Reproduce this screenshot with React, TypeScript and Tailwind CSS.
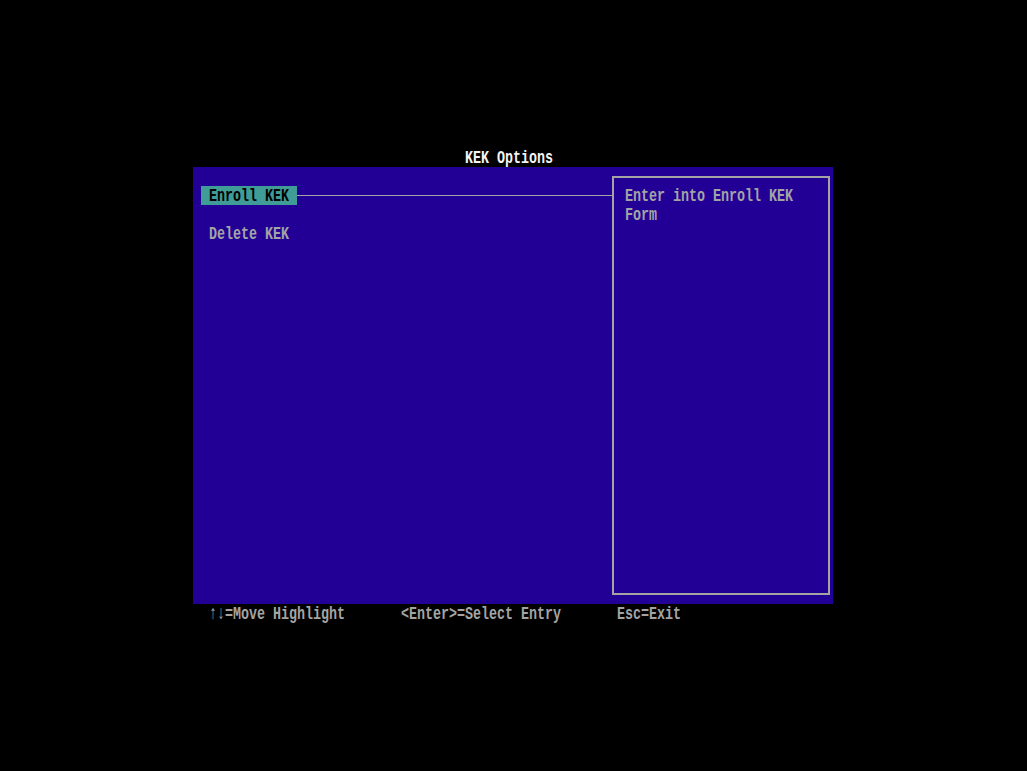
import type { ReactNode } from "react"

// 8x19 text cells: Liberation Mono at 19px is 11.4px wide, squeezed down to 8px
function Txt({ children, className = "" }: { children: ReactNode; className?: string }) {
  return (
    <span
      className={
        "block h-[19px] pt-px whitespace-pre origin-left scale-x-[0.7018] font-['Liberation_Mono','DejaVu_Sans_Mono',monospace] font-bold text-[19px] leading-[18px] " +
        className
      }
    >
      {children}
    </span>
  )
}

export default function App() {
  return (
    <div className="w-full h-[771px] bg-black overflow-hidden">
      <div className="ml-[193px] pt-[148px] w-[640px]">

        {/* title row */}
        <div className="h-[19px] pl-[272px]">
          <Txt className="text-[#f4f4f4]">KEK Options</Txt>
        </div>

        {/* main panel */}
        <div className="h-[437px] bg-[#230095] flex">

          <div className="w-[419px] pt-[19px]">
            <div className="h-[19px] flex items-center">
              <div className="ml-[8px] w-[96px] h-[19px] pl-[8px] bg-[#3f9c97]">
                <Txt className="text-black">Enroll KEK</Txt>
              </div>
              <div className="flex-1 h-px bg-[#a4a4a4]" />
            </div>

            <div className="h-[19px] mt-[19px] pl-[16px]">
              <Txt className="text-[#a4a4a4]">Delete KEK</Txt>
            </div>
          </div>

          {/* help box */}
          <div className="mt-[9px] w-[218px] h-[419px] border-2 border-[#a4a4a4] pl-[11px] pt-[8px]">
            <Txt className="text-[#a4a4a4]">Enter into Enroll KEK</Txt>
            <Txt className="text-[#a4a4a4]">Form</Txt>
          </div>
        </div>

        {/* key hints */}
        <div className="h-[19px] flex pl-[16px]">
          <div className="w-[192px]">
            <Txt className="text-[#a4a4a4]">↑↓=Move Highlight</Txt>
          </div>
          <div className="w-[216px]">
            <Txt className="text-[#a4a4a4]">&lt;Enter&gt;=Select Entry</Txt>
          </div>
          <div>
            <Txt className="text-[#a4a4a4]">Esc=Exit</Txt>
          </div>
        </div>

      </div>
    </div>
  )
}
